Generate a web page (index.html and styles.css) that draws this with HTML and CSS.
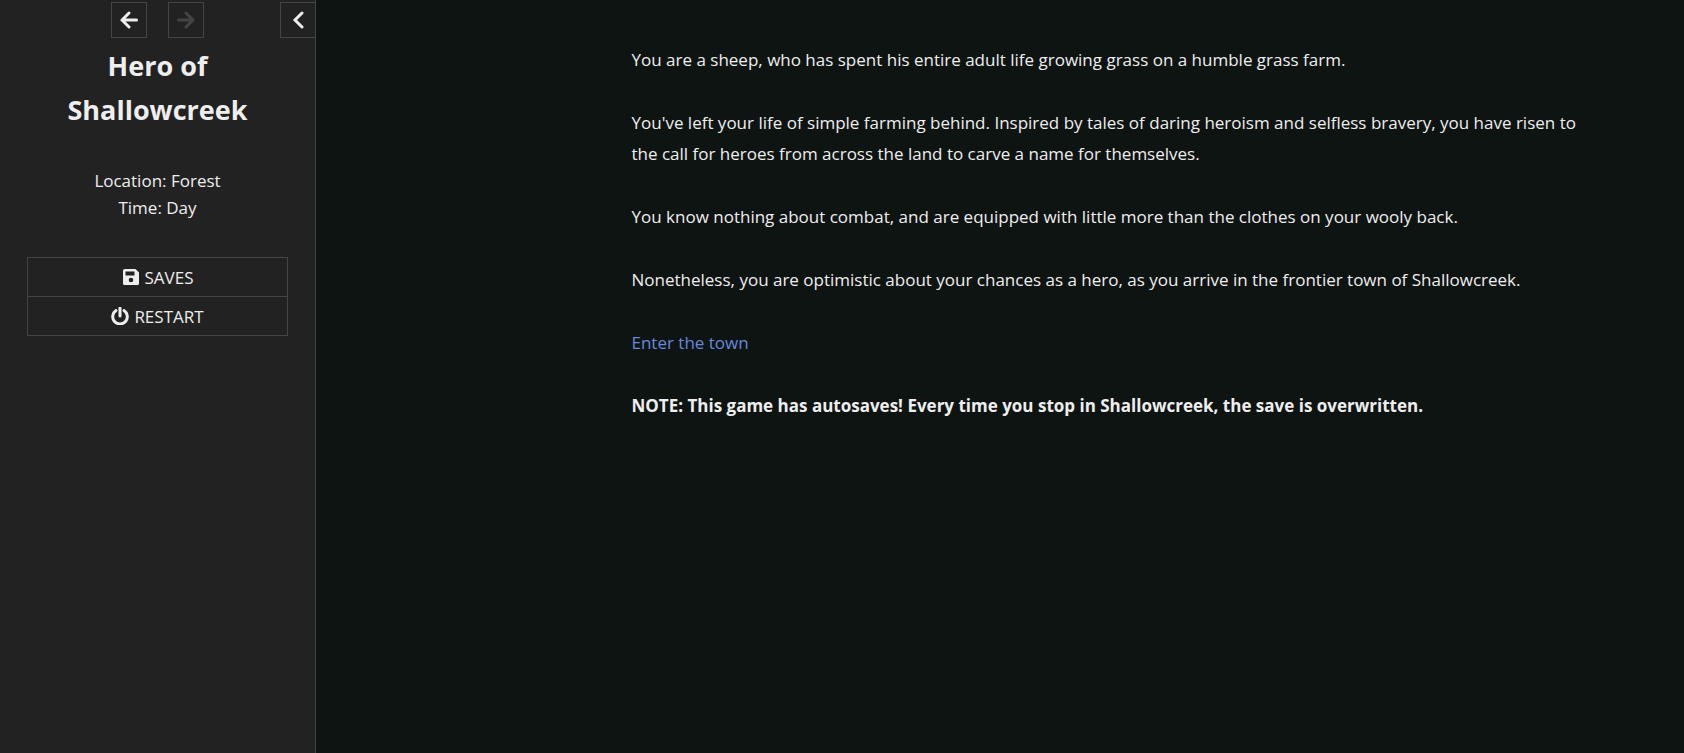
FILE: index.html
```html
<!DOCTYPE html>
<html lang="en">
<head>
  <meta charset="UTF-8">
  <title>Hero of Shallowcreek</title>
  <meta name="viewport" content="width=device-width, initial-scale=1.0">
  <link rel="stylesheet" href="styles.css">
</head>
<body>
  <aside class="ui-bar">
    <div class="ui-bar-tray">
      <button class="tray-btn history-back" aria-label="Go backward">
        <svg class="icon" viewBox="0 0 18 18"><path d="M9 2 L2 9 L9 16 M2 9 H16.500"/></svg>
      </button>
      <button class="tray-btn history-forward" aria-label="Go forward" disabled>
        <svg class="icon" viewBox="0 0 18 18"><path d="M9 2 L16 9 L9 16 M16 9 H1.500"/></svg>
      </button>
      <button class="tray-btn ui-bar-toggle" aria-label="Toggle the UI bar">
        <svg class="icon" viewBox="0 0 18 18"><path d="M13 2 L6 9 L13 16"/></svg>
      </button>
    </div>

    <div class="ui-bar-body">
      <h1 class="story-title">Hero of Shallowcreek</h1>
      <div class="story-caption">
        Location: Forest<br>
        Time: Day
      </div>
      <nav class="menu">
        <button class="menu-item">
          <svg class="menu-icon" viewBox="0 0 18 18"><path fill-rule="evenodd" d="M3 1 H13.5 L17 4.500 V15.500 Q17 17 15.500 17 H2.500 Q1 17 1 15.500 V2.500 Q1 1 3 1 Z M3.500 3.500 V7.500 H12.500 V3.500 Z M9 9.700 A2.300 2.300 0 1 0 9 14.300 A2.300 2.300 0 1 0 9 9.700 Z"/></svg>
          SAVES
        </button>
        <button class="menu-item">
          <svg class="menu-icon power" viewBox="0 0 18 18"><path d="M5 3.500 A7.300 7.300 0 1 0 13 3.500 M9 1 V9"/></svg>
          RESTART
        </button>
      </nav>
    </div>
  </aside>

  <main class="story">
    <div class="passage">
      <p>You are a sheep, who has spent his entire adult life growing grass on a humble grass farm.</p>
      <p>You've left your life of simple farming behind. Inspired by tales of daring heroism and selfless bravery, you have risen to the call for heroes from across the land to carve a name for themselves.</p>
      <p>You know nothing about combat, and are equipped with little more than the clothes on your wooly back.</p>
      <p>Nonetheless, you are optimistic about your chances as a hero, as you arrive in the frontier town of Shallowcreek.</p>
      <p><a href="#town">Enter the town</a></p>
      <p><strong>NOTE: This game has autosaves! Every time you stop in Shallowcreek, the save is overwritten.</strong></p>
    </div>
  </main>
</body>
</html>
```

FILE: styles.css
```css
:root {
  --bg: #0e1412;
  --bar-bg: #222;
  --border: #444;
  --text: #eee;
  --link: #68d;
}

* {
  box-sizing: border-box;
}

body {
  display: flex;
  min-height: 100vh;
  margin: 0;
  background: var(--bg);
  color: var(--text);
  font: 17px/31px "Segoe UI", "Open Sans", sans-serif;
}

.ui-bar {
  flex: none;
  width: 316px;
  background: var(--bar-bg);
  border-right: 1px solid var(--border);
  text-align: center;
}

.ui-bar-tray {
  display: grid;
  grid-template-columns: 1fr auto auto 1fr;
  gap: 21px;
  padding-top: 2px;
}

.tray-btn {
  display: flex;
  align-items: center;
  justify-content: center;
  width: 36px;
  height: 36px;
  padding: 0;
  background: none;
  border: 1px solid var(--border);
  color: var(--text);
  cursor: pointer;
}

.tray-btn:disabled {
  color: var(--border);
  cursor: default;
}

.history-back {
  grid-column: 2;
}

.ui-bar-toggle {
  justify-self: end;
  width: 35px;
  border-right: none;
}

.icon,
.power {
  fill: none;
  stroke: currentColor;
  stroke-width: 3;
  stroke-linecap: round;
}

.icon {
  width: 18px;
  height: 18px;
}

.ui-bar-body {
  padding: 6px 27px;
}

.story-title {
  margin: 0 0 35px;
  font-size: 27px;
  line-height: 44px;
}

.story-caption {
  margin-bottom: 36px;
  line-height: 27px;
}

.menu {
  border: 1px solid var(--border);
}

.menu-item {
  display: flex;
  align-items: center;
  justify-content: center;
  gap: 5px;
  width: 100%;
  height: 38px;
  padding: 0;
  background: none;
  border: none;
  color: var(--text);
  font: inherit;
  cursor: pointer;
}

.menu-item + .menu-item {
  height: 39px;
  border-top: 1px solid var(--border);
}

.menu-icon {
  width: 18px;
  height: 18px;
}

.menu-icon:not(.power) {
  fill: currentColor;
}

.story {
  flex: 1;
  padding: 44px 45px 44px 280px;
}

.passage {
  max-width: 972px;
  margin: 0 auto;
}

.passage p {
  margin: 0 0 32px;
}

a {
  color: var(--link);
  text-decoration: none;
}

a:hover {
  text-decoration: underline;
}
```
